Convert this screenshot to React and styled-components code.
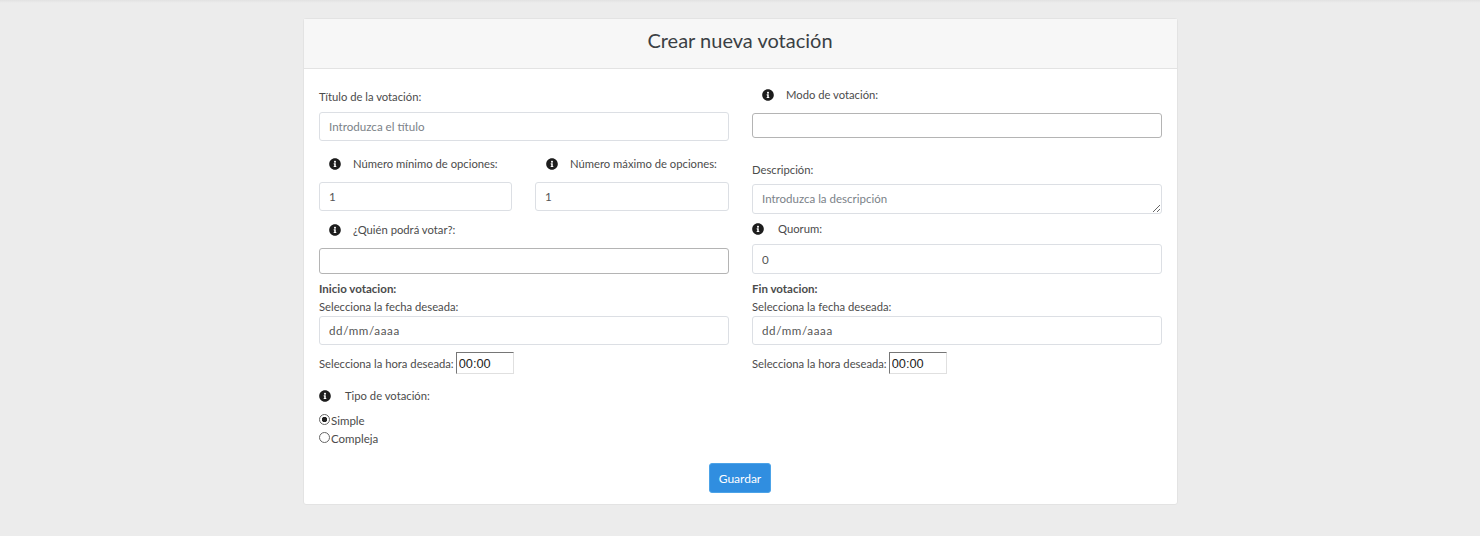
import React from 'react';
import styled, { createGlobalStyle } from 'styled-components';

const GlobalStyle = createGlobalStyle`
  html, body {
    margin: 0;
    height: 100%;
    background: #ececec;
    font-family: Lato, "Liberation Sans", sans-serif;
    font-size: 11.25px;
    color: #4b4b4b;
  }
`;

const Page = styled.div`
  min-height: 536px;
  box-sizing: border-box;
  padding-top: 18px;
  background: linear-gradient(#e2e2e2, #ececec 3px);
`;

const Card = styled.form`
  width: 875px;
  height: 487px;
  box-sizing: border-box;
  margin: 0 0 0 303px;
  background: #fff;
  border: 1px solid #e3e3e3;
  border-radius: 3px;
`;

const CardHeader = styled.h1`
  margin: 0;
  height: 50px;
  box-sizing: border-box;
  padding-right: 1px;
  background: #f7f7f7;
  border-bottom: 1px solid #e3e3e3;
  text-align: center;
  font-size: 20px;
  font-weight: 400;
  line-height: 42px;
  color: #3b3f44;
`;

const Body = styled.div`
  padding: 0 15px;
`;

const Columns = styled.div`
  display: flex;
  gap: 23px;
  height: 319px;
`;

const Column = styled.div`
  width: 410px;
  display: flex;
  flex-direction: column;
`;

const Row = styled.div`
  display: grid;
  grid-template-columns: 193px 194px;
  gap: 23px;
`;

const Field = styled.div`
  display: flex;
  flex-direction: column;
  min-width: 0;
  margin-top: ${(p) => p.$top || 0}px;
`;

const Label = styled.label`
  display: flex;
  align-items: center;
  height: 15px;
  line-height: 15px;
  margin-bottom: ${(p) => p.$gap ?? 7}px;
  padding-left: ${(p) => p.$indent || 0}px;
`;

const Hint = styled.svg`
  width: 12px;
  height: 12px;
  flex: none;
  margin-right: ${(p) => p.$space || 12}px;
  color: #1d1d1d;
`;

const Input = styled.input`
  box-sizing: border-box;
  width: 100%;
  height: ${(p) => p.$height || 29}px;
  padding: 0 9px;
  border: 1px solid #dcdfe4;
  border-radius: 3px;
  background: #fff;
  font-family: inherit;
  font-size: 11.6px;
  letter-spacing: ${(p) => (p.$date ? '0.6px' : '0')};
  color: #555;
  outline: none;
  &::placeholder {
    color: #7b8288;
    opacity: 1;
  }
`;

const Select = styled.select`
  box-sizing: border-box;
  width: 100%;
  height: ${(p) => p.$height || 26}px;
  border: 1px solid #b4b4b4;
  border-radius: 3px;
  background: #fff;
  appearance: none;
  outline: none;
`;

const TextArea = styled.textarea`
  box-sizing: border-box;
  display: block;
  width: 100%;
  height: 30px;
  padding: 7px 9px;
  border: 1px solid #dcdfe4;
  border-radius: 3px;
  font-family: inherit;
  font-size: 11.5px;
  color: #555;
  outline: none;
  &::placeholder {
    color: #7b8288;
    opacity: 1;
  }
`;

const Strong = styled.div`
  font-size: 11.5px;
  font-weight: 700;
  line-height: 15px;
  margin-top: 7px;
`;

const SubLabel = styled.div`
  line-height: 15px;
  margin: 3px 0 2px;
`;

const TimeRow = styled.div`
  display: flex;
  align-items: center;
  gap: 2px;
  margin-top: 7px;
  height: 22px;
`;

const TimeInput = styled.input`
  box-sizing: border-box;
  width: 58px;
  height: 22px;
  padding: 1px 2px;
  border-width: 1px;
  border-style: solid;
  border-color: #767676 #e0e0e0 #e0e0e0 #767676;
  font-family: "Liberation Sans", sans-serif;
  font-size: 12.8px;
  color: #222;
  outline: none;
`;

const Radio = styled.label`
  display: flex;
  align-items: center;
  height: 18px;
  gap: 1px;
  font-size: 11.5px;
`;

const RadioMark = styled.input`
  appearance: none;
  box-sizing: border-box;
  width: 11px;
  height: 11px;
  margin: 0;
  position: relative;
  top: -1px;
  border: 1px solid #666;
  border-radius: 50%;
  background: #fff;
  &:checked {
    background: radial-gradient(circle, #222 0 2.4px, #fff 3px);
  }
`;

const Footer = styled.div`
  display: flex;
  justify-content: center;
  padding: 16px 1px 0 0;
`;

const SaveButton = styled.button`
  width: 62px;
  height: 30px;
  padding: 0;
  border: 1px solid #4ca3e8;
  border-radius: 3px;
  background: #308ee0;
  color: #fff;
  font-family: inherit;
  font-size: 12px;
  font-weight: 400;
`;

const InfoIcon = (props) => (
  <Hint viewBox="0 0 512 512" {...props}>
    <path
      fill="currentColor"
      d="M256 8C119 8 8 119 8 256s111 248 248 248 248-111 248-248S393 8 256 8zm0 110c23 0 42 19 42 42s-19 42-42 42-42-19-42-42 19-42 42-42zm56 254c0 7-5 12-12 12h-88c-7 0-12-5-12-12v-24c0-7 5-12 12-12h12v-64h-12c-7 0-12-5-12-12v-24c0-7 5-12 12-12h64c7 0 12 5 12 12v100h12c7 0 12 5 12 12v24z"
    />
  </Hint>
);

const DateGroup = ({ title }) => (
  <>
    <Strong>{title}</Strong>
    <SubLabel>Selecciona la fecha deseada:</SubLabel>
    <Input $date defaultValue="dd/mm/aaaa" />
    <TimeRow>
      <span>Selecciona la hora deseada:</span>
      <TimeInput defaultValue="00:00" />
    </TimeRow>
  </>
);

const App = () => (
  <Page>
    <GlobalStyle />
    <Card>
      <CardHeader>Crear nueva votación</CardHeader>
      <Body>
        <Columns>
          <Column>
            <Field $top={20}>
              <Label $gap={8}>Título de la votación:</Label>
              <Input placeholder="Introduzca el título" />
            </Field>
            <Row>
              <Field $top={15}>
                <Label $indent={10} $gap={11}>
                  <InfoIcon />
                  Número mínimo de opciones:
                </Label>
                <Input defaultValue="1" />
              </Field>
              <Field $top={15}>
                <Label $indent={11} $gap={11}>
                  <InfoIcon />
                  Número máximo de opciones:
                </Label>
                <Input defaultValue="1" />
              </Field>
            </Row>
            <Field $top={11}>
              <Label $indent={10} $gap={11}>
                <InfoIcon />
                ¿Quién podrá votar?:
              </Label>
              <Select />
            </Field>
            <DateGroup title="Inicio votacion:" />
          </Column>
          <Column>
            <Field $top={18}>
              <Label $indent={10} $gap={11}>
                <InfoIcon />
                Modo de votación:
              </Label>
              <Select $height={25} />
            </Field>
            <Field $top={24}>
              <Label $gap={7}>Descripción:</Label>
              <TextArea placeholder="Introduzca la descripción" />
            </Field>
            <Field $top={7}>
              <Label $gap={8}>
                <InfoIcon $space={14} />
                Quorum:
              </Label>
              <Input $height={30} defaultValue="0" />
            </Field>
            <DateGroup title="Fin votacion:" />
          </Column>
        </Columns>
        <Field>
          <Label $gap={8}>
            <InfoIcon $space={14} />
            Tipo de votación:
          </Label>
          <Radio>
            <RadioMark type="radio" name="tipo" defaultChecked />
            Simple
          </Radio>
          <Radio>
            <RadioMark type="radio" name="tipo" />
            Compleja
          </Radio>
        </Field>
        <Footer>
          <SaveButton type="button">Guardar</SaveButton>
        </Footer>
      </Body>
    </Card>
  </Page>
);

export default App;
